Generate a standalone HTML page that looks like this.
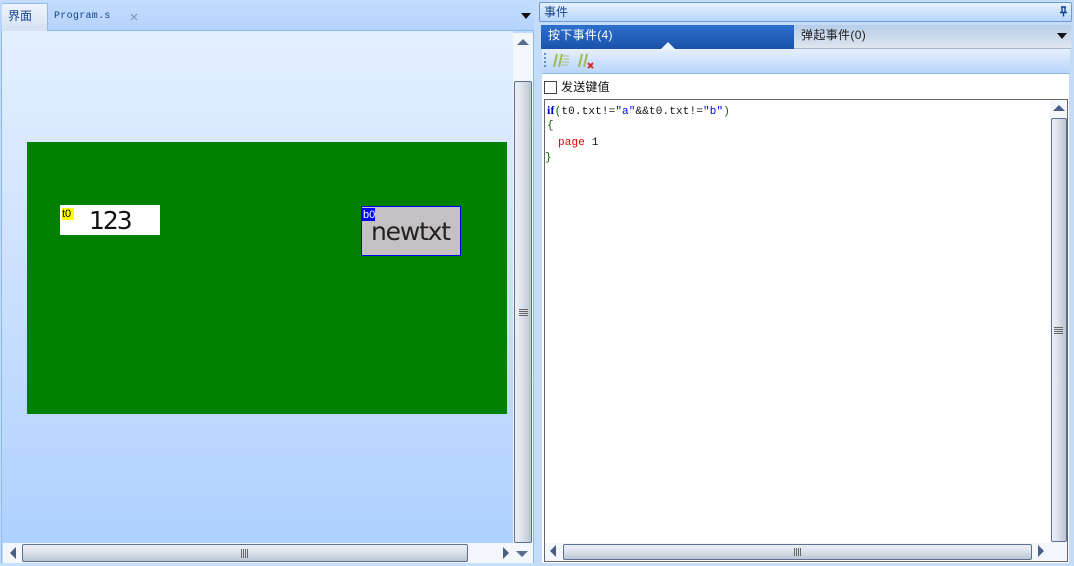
<!DOCTYPE html>
<html><head><meta charset="utf-8"><style>
html,body{margin:0;padding:0}
#p{position:relative;width:1074px;height:566px;overflow:hidden;background:#bfdbff;font-family:"Liberation Sans","WenQuanYi Zen Hei","Noto Sans CJK SC",sans-serif}
#p div,#p svg,#p span{position:absolute;box-sizing:border-box}
.t{white-space:pre;line-height:14px}
.c{font-family:"Liberation Mono","WenQuanYi Zen Hei",monospace;font-size:11px;white-space:pre;line-height:14px;letter-spacing:.14px}
.vth{background:linear-gradient(90deg,#eceff4,#dfe4ec 40%,#b9c5d3);border:1px solid #5f6f92;border-radius:2px}
.hth{background:linear-gradient(180deg,#eceff4,#dfe4ec 40%,#b9c5d3);border:1px solid #5f6f92;border-radius:2px}
.g{background:repeating-linear-gradient(90deg,#666 0 1px,transparent 1px 2px)}
.g2{background:repeating-linear-gradient(180deg,#666 0 1px,transparent 1px 2px)}
</style></head><body><div id="p">
<!-- left panel -->
<div style="left:0;top:0;width:535px;height:31px;background:linear-gradient(180deg,#c2dcff,#b5d3fb)"></div>
<div style="left:2px;top:3px;width:46px;height:28px;background:linear-gradient(180deg,#eef4fd,#d5e2f2);border-top:1px solid #8fbbe8;border-right:1px solid #8fbbe8;border-radius:2px 2px 0 0"></div>
<div class="t" style="left:8px;top:9px;font-size:12px;color:#15428b">界面</div>
<div class="c" style="left:54px;top:10px;font-size:10px;color:#15428b;letter-spacing:.3px">Program.s</div>
<svg style="left:130px;top:13px" width="8" height="8"><path d="M1 1L7 7M7 1L1 7" stroke="#7f95b3" stroke-width="1.2"/></svg>
<svg style="left:520px;top:12px" width="12" height="8"><path d="M1 1H11L6 7Z" fill="#111"/></svg>
<div style="left:48px;top:30px;width:486px;height:1px;background:#8dbae8"></div>
<div style="left:1px;top:31px;width:1px;height:535px;background:#8dbae8"></div>
<div style="left:2px;top:31px;width:511px;height:512px;background:linear-gradient(180deg,#e4efff,#d6e6ff 30%,#aed1ff)"></div>
<div style="left:27px;top:142px;width:480px;height:272px;background:#008000"></div>
<div style="left:60px;top:205px;width:100px;height:30px;background:#fff"></div>
<div style="left:62px;top:208px;width:12px;height:12px;background:#ff0"></div>
<div class="t" style="left:62px;top:207px;font-size:11px;color:#000">t0</div>
<div class="t" style="left:89px;top:206px;font-size:25px;line-height:30px;color:#111;font-family:'DejaVu Sans',sans-serif;letter-spacing:-2px">123</div>
<div style="left:361px;top:206px;width:100px;height:50px;background:#c4c0c4;border:1px solid #0000f0"></div>
<div style="left:362px;top:208px;width:13px;height:13px;background:#00f"></div>
<div class="t" style="left:363px;top:208px;font-size:11px;color:#fff">b0</div>
<div class="t" style="left:371px;top:217px;font-size:25px;line-height:30px;color:#222;font-family:'DejaVu Sans',sans-serif;letter-spacing:-1.2px">newtxt</div>
<!-- left v scroll -->
<div style="left:513px;top:33px;width:20px;height:530px;background:#f3f6fa"></div>
<div style="left:533px;top:31px;width:1px;height:535px;background:#8dbae8"></div>
<svg style="left:516px;top:38px" width="14" height="8"><path d="M1 7H13L7 1Z" fill="#5a6b8c"/></svg>
<div class="vth" style="left:514px;top:81px;width:18px;height:462px"></div>
<div class="g2" style="left:519px;top:309px;width:9px;height:7px"></div>
<svg style="left:515px;top:550px" width="14" height="8"><path d="M1 1H13L7 7Z" fill="#5a6b8c"/></svg>
<!-- left h scroll -->
<div style="left:3px;top:543px;width:510px;height:20px;background:#f3f6fa"></div>
<div style="left:0;top:563px;width:534px;height:3px;background:#c5e0fa"></div>
<svg style="left:9px;top:547px" width="8" height="13"><path d="M7 0V12L1 6Z" fill="#4a5e82"/></svg>
<div class="hth" style="left:22px;top:544px;width:446px;height:18px"></div>
<div class="g" style="left:241px;top:549px;width:7px;height:9px"></div>
<svg style="left:502px;top:547px" width="8" height="13"><path d="M1 0V12L7 6Z" fill="#4a5e82"/></svg>
<!-- right panel -->
<div style="left:534px;top:0;width:540px;height:566px;background:#c5dcf8"></div>
<div style="left:539px;top:2px;width:533px;height:20px;background:linear-gradient(180deg,#e4f0ff,#b9d6fb);border:1px solid #6e9bd0;border-radius:2px"></div>
<div class="t" style="left:544px;top:5px;font-size:12px;color:#15428b">事件</div>
<svg style="left:1059px;top:6px" width="9" height="11"><path d="M2 1H7M3 1V6M6 1V6M1 6.5H8M4.5 6.5V10.5" stroke="#15428b" stroke-width="1.4" fill="none"/></svg>
<div style="left:541px;top:25px;width:253px;height:24px;background:linear-gradient(180deg,#2e6fce,#1a52aa)"></div>
<div style="left:794px;top:25px;width:277px;height:24px;background:linear-gradient(180deg,#b6cde9,#dfe6ef);border-bottom:1px solid #a7b5c8"></div>
<div class="t" style="left:548px;top:28px;font-size:12px;color:#fff;letter-spacing:.3px">按下事件(4)</div>
<div class="t" style="left:801px;top:28px;font-size:12px;color:#222;letter-spacing:.35px">弹起事件(0)</div>
<svg style="left:1056px;top:32px" width="12" height="8"><path d="M1 1H11L6 7Z" fill="#111"/></svg>
<svg style="left:661px;top:42px" width="14" height="7"><path d="M0 7L7 0L14 7Z" fill="#eaf3ff"/></svg>
<div style="left:542px;top:49px;width:528px;height:25px;background:linear-gradient(180deg,#e6f0fd,#b8d5fb);border-bottom:1px solid #8db7e6"></div>
<svg style="left:543px;top:51px" width="5" height="20"><path d="M2 2V18" stroke="#5f94cf" stroke-width="2" stroke-dasharray="2 2"/></svg>
<svg style="left:552px;top:53px" width="46" height="16"><g stroke="#9dbb50" stroke-width="2" fill="none"><path d="M2 14L5 1M7 14L10 1"/><path d="M27 14L30 1M32 14L35 1"/></g><path d="M11 3H17M11 6H17M10 9H17M10 12H16" stroke="#a8bf78" stroke-width="1"/><path d="M36 10L41 15M41 10L36 15" stroke="#d92c2c" stroke-width="2"/></svg>
<div style="left:542px;top:74px;width:527px;height:489px;background:#fff"></div>
<div style="left:544px;top:81px;width:13px;height:13px;background:#fff;border:1px solid #444"></div>
<div class="t" style="left:561px;top:80px;font-size:12px;color:#111;letter-spacing:.2px">发送键值</div>
<div style="left:544px;top:99px;width:524px;height:463px;background:#fff;border:1px solid #666"></div>
<div class="c" style="left:547px;top:103px;color:#111"><b style="color:#00c;font-family:'Liberation Serif',serif;font-size:12px">if</b><span style="position:static;color:#060">(</span>t0.txt!=<span style="position:static;color:#00e">"a"</span>&amp;&amp;t0.txt!=<span style="position:static;color:#00e">"b"</span><span style="position:static;color:#060">)</span></div>
<div class="c" style="left:547px;top:119px;color:#060">{</div>
<div class="c" style="left:558px;top:136px;color:#e00">page <span style="position:static;color:#111">1</span></div>
<div class="c" style="left:545px;top:151px;color:#060">}</div>
<!-- right v scroll -->
<div style="left:1050px;top:100px;width:17px;height:444px;background:#f3f6fa"></div>
<svg style="left:1052px;top:104px" width="14" height="8"><path d="M1 7H13L7 1Z" fill="#4a5e82"/></svg>
<div class="vth" style="left:1051px;top:118px;width:16px;height:424px"></div>
<div class="g2" style="left:1054px;top:327px;width:9px;height:7px"></div>
<svg style="left:1052px;top:550px" width="14" height="8"><path d="M1 1H13L7 7Z" fill="#4a5e82"/></svg>
<!-- right h scroll -->
<div style="left:545px;top:543px;width:522px;height:18px;background:#f3f6fa"></div>
<svg style="left:549px;top:545px" width="8" height="13"><path d="M7 0V12L1 6Z" fill="#4a5e82"/></svg>
<div class="hth" style="left:563px;top:544px;width:469px;height:16px"></div>
<div class="g" style="left:794px;top:548px;width:7px;height:8px"></div>
<svg style="left:1037px;top:545px" width="8" height="13"><path d="M1 0V12L7 6Z" fill="#4a5e82"/></svg>
</div></body></html>
